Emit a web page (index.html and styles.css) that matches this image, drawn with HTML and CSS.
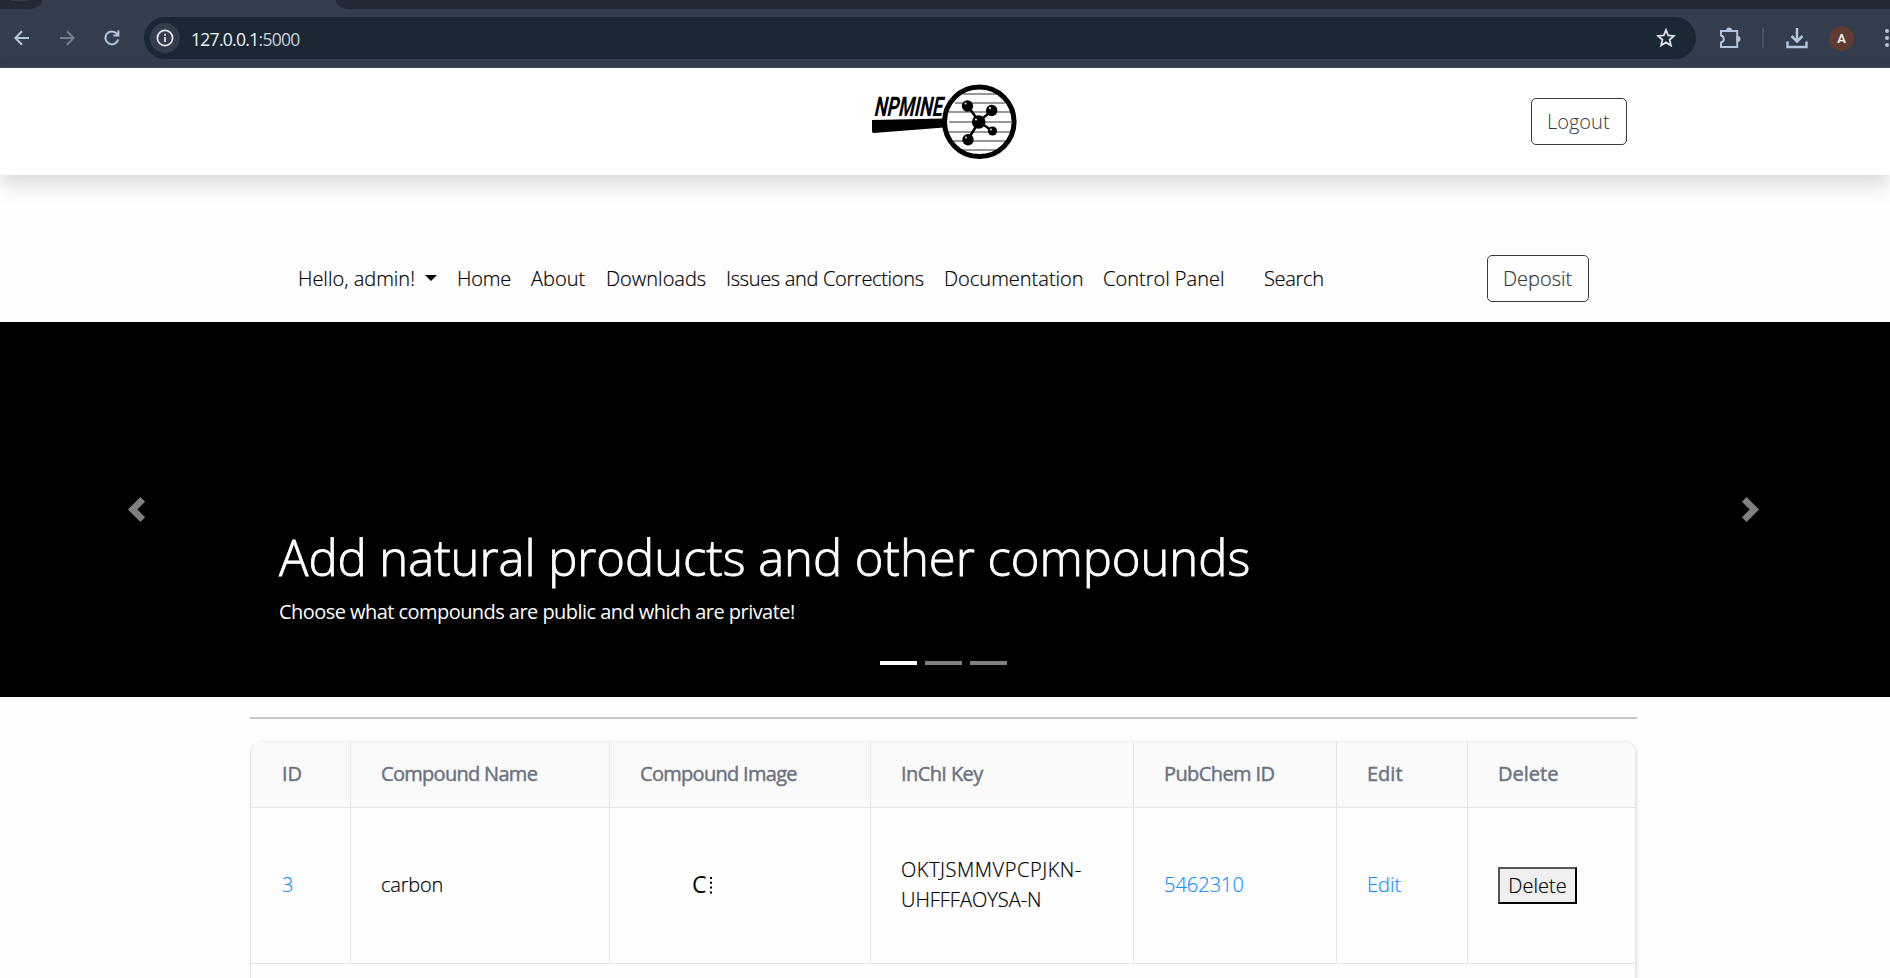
FILE: index.html
```html
<!DOCTYPE html>
<html lang="en">
<head>
<meta charset="utf-8">
<title>NPMine</title>
<link rel="stylesheet" href="styles.css">
</head>
<body>
<div class="browser">
  <div class="tabs"><span class="tab-left"><i></i></span><span class="tab-right"></span></div>
  <div class="toolbar">
    <svg class="ico back" width="16" height="16" viewBox="0 0 16 16"><path d="M15 8H2M8 1.2L1.4 8L8 14.8"/></svg>
    <svg class="ico forward" width="16" height="16" viewBox="0 0 16 16"><path d="M1 8h13M8 1.2L14.6 8L8 14.8"/></svg>
    <svg class="ico reload" width="16" height="16" viewBox="0 0 16 16"><path d="M14.2 9.5A6.5 6.5 0 1 1 12.8 3.6L14.3 5.2M14.4 .5V5.4H9.4"/></svg>
    <div class="omnibox">
      <span class="info"><svg width="18" height="18" viewBox="0 0 18 18"><circle cx="9" cy="9" r="7.6"/><path d="M9 8v5M9 4.8v2"/></svg></span>
      <span class="url"><b>127.0.0.1</b>:5000</span>
      <svg class="star" width="20" height="20" viewBox="0 0 20 20"><path d="M10 2l2.200 5.400 5.800.5-4.400 3.800 1.300 5.700L10 14.400l-4.900 3 1.300-5.700L2 7.900l5.800-.5z"/></svg>
    </div>
    <svg class="ico puzzle" width="22" height="22" viewBox="0 0 22 22"><path d="M2 4h16.200v16H2v-4.500a3.600 3.600 0 0 0 0-7z"/><path d="M8 3.500a2 2 0 0 1 4 0zM18.500 10a2 2 0 0 1 0 4z"/></svg>
    <span class="divider"></span>
    <svg class="ico download" width="22" height="22" viewBox="0 0 22 22"><path d="M11 1v13M5.500 9L11 14.500L16.500 9M1.500 14.500V20h19v-5.500"/></svg>
    <span class="avatar">A</span>
    <svg class="dots" width="6" height="20" viewBox="0 0 6 20"><circle cx="3" cy="3" r="2"/><circle cx="3" cy="10" r="2"/><circle cx="3" cy="17" r="2"/></svg>
  </div>
</div>

<header class="header">
  <svg class="logo" width="148" height="78" viewBox="870 82.500 148 78">
    <path d="M872 119.500L944 118V127L873.500 132.500Q872 132.500 872 130z"/>
    <text transform="translate(873.500 115.800) skewX(-12)" textLength="68" lengthAdjust="spacingAndGlyphs">NPMINE</text>
    <path class="rules" d="M963 93.500h34M955 102.500h50M949 111.500h62M949 121.500h62M949 131.500h62M953 140.500h54M961 149.500h36"/>
    <circle class="ring" cx="979.300" cy="121.300" r="34.800"/>
    <path class="bond" d="M968 106l11 15l13-11M968 139l11-18l14 10"/>
    <circle cx="967.500" cy="105.500" r="5.700"/><circle cx="991.700" cy="110" r="5.700"/><circle cx="978.700" cy="121.500" r="6.800"/><circle cx="968" cy="139.300" r="5.700"/><circle cx="992.500" cy="130.500" r="4.600"/>
    <g class="shine"><circle cx="965.500" cy="103" r="1.100"/><circle cx="990" cy="107.700" r="1.100"/><circle cx="976" cy="119" r="1.100"/><circle cx="966" cy="137" r="1.100"/><circle cx="991" cy="129" r="1"/></g>
  </svg>
  <a class="btn logout"><span>Logout</span></a>
</header>

<nav class="nav">
  <a class="hello"><span>Hello, admin!</span><i class="caret"></i></a>
  <a class="home">Home</a>
  <a class="about">About</a>
  <a class="downloads">Downloads</a>
  <a class="issues">Issues and Corrections</a>
  <a class="docs">Documentation</a>
  <a class="panel">Control Panel</a>
  <a class="search">Search</a>
  <a class="btn deposit"><span>Deposit</span></a>
</nav>

<section class="carousel">
  <svg class="arrow" width="25" height="25" viewBox="0 0 8 8"><path d="M5.250 0l-4 4 4 4 1.500-1.500-2.500-2.500 2.500-2.500z"/></svg>
  <div class="slide">
    <h1>Add natural products and other compounds</h1>
    <p>Choose what compounds are public and which are private!</p>
    <div class="indicators"><i class="active"></i><i></i><i></i></div>
  </div>
  <svg class="arrow" width="25" height="25" viewBox="0 0 8 8"><path d="M2.750 0l-1.500 1.500 2.500 2.500-2.500 2.500 1.500 1.500 4-4z"/></svg>
</section>

<main class="content">
  <hr>
  <div class="table">
    <div class="row head">
      <div><span>ID</span></div><div><span class="tight">Compound Name</span></div><div><span class="tight">Compound Image</span></div><div><span class="snug">InChI Key</span></div><div><span class="snug">PubChem ID</span></div><div><span>Edit</span></div><div><span>Delete</span></div>
    </div>
    <div class="row data">
      <div><a>3</a></div>
      <div><span class="name">carbon</span></div>
      <div class="picture"><svg width="24" height="40" viewBox="0 0 24 40"><text x="0" y="27.500">C</text><path d="M19 12v17"/></svg></div>
      <div class="key"><span class="wide">OKTJSMMVPCPJKN-</span><br><span>UHFFFAOYSA-N</span></div>
      <div><a>5462310</a></div>
      <div><a>Edit</a></div>
      <div><button type="button"><span>Delete</span></button></div>
    </div>
    <div class="row next"></div>
  </div>
</main>
</body>
</html>
```
FILE: styles.css
```css
* { box-sizing: border-box; }
html, body { height: 100%; }
body {
  margin: 0;
  overflow: hidden;
  background: #fefefe;
  color: #000;
  font: 300 20px/30px "Open Sans", sans-serif;
}
a, span, p, h1 { white-space: nowrap; }

/* browser bar */
.browser { height: 68px; background: #333d4d; border-bottom: 1px solid #454d59; }
.tabs { height: 9px; display: flex; justify-content: space-between; }
.tab-left { width: 42px; background: #232a36; border-bottom-right-radius: 12px 9px; }
.tab-left i { display: block; width: 17px; height: 1px; margin-left: 11px; background: #343a42; }
.tab-right { width: 1554px; background: #232a36; border-bottom-left-radius: 12px 9px; }
.toolbar { height: 58px; display: flex; align-items: center; padding-left: 14px; overflow: hidden; }
.toolbar > * { flex: none; }
.ico { fill: none; stroke: #b4c6de; stroke-width: 2; }
.forward { stroke: #767d88; margin-left: 29px; }
.reload { margin-left: 29px; }
.omnibox { width: 1552px; height: 42px; margin-left: 24px; border-radius: 21px; background: #1c2736; display: flex; align-items: center; }
.info { width: 30px; height: 30px; margin-left: 6px; border-radius: 50%; background: #333d4d; display: flex; align-items: center; justify-content: center; }
.info svg, .star { fill: none; stroke: #dfe1e5; stroke-width: 1.8; }
.url { margin: 1px 0 0 11px; font-size: 17.500px; font-weight: 400; letter-spacing: -.7px; color: #c9ced6; }
.url b { font-weight: 400; color: #f0f2f5; }
.star { margin: 0 20px 0 auto; }
.puzzle { margin-left: 23px; }
.divider { width: 2px; height: 20px; margin-left: 21px; background: #4b5361; }
.download { margin-left: 22px; stroke-width: 2.500; }
.avatar { width: 25px; height: 25px; margin-left: 21px; border-radius: 50%; background: #5f3b32; color: #fff; font: 500 13px/25px Roboto, sans-serif; text-align: center; }
.dots { margin-left: 30px; fill: #b4c6de; }

/* header */
.header { position: relative; height: 107px; display: flex; align-items: center; padding-left: 870px; background: #fff; box-shadow: 0 10px 20px rgba(0,0,0,.15); }
.logo text { font: 700 27px Roboto, sans-serif; }
.logo .ring { fill: none; stroke: #000; stroke-width: 5; }
.logo .rules { stroke: #333; stroke-width: 1; }
.logo .bond { fill: none; stroke: #000; stroke-width: 2.500; }
.logo .shine { fill: #ddd; }
.btn { height: 47px; border: 1px solid #343a40; border-radius: 5px; color: #343a40; line-height: 45px; padding-left: 15px; }
.logout { width: 96px; margin-left: 513px; }

/* navigation */
.nav { height: 147px; display: flex; align-items: flex-end; padding: 0 0 20px 298px; -webkit-text-stroke: .2px; }
.nav > a { height: 47px; line-height: 47px; flex: none; }
.nav .hello { width: 159px; display: flex; align-items: center; }
.caret { margin: -2px 20px 0 auto; border: 6px solid transparent; border-top-color: #000; border-bottom: 0; }
.home { width: 74px; letter-spacing: -.2px; }
.about { width: 75px; }
.downloads { width: 120px; }
.issues { width: 218px; letter-spacing: -.32px; }
.docs { width: 159px; }
.panel { width: 161px; }
.search { width: 223px; letter-spacing: -.3px; }
.nav .deposit { width: 102px; line-height: 45px; }

/* carousel */
.carousel { height: 375px; background: #000; color: #fff; display: flex; align-items: center; padding-left: 124px; }
.arrow { fill: #808080; flex: none; }
.slide { width: 1589px; height: 375px; padding: 205px 0 0 130px; flex: none; }
.slide h1 { margin: 0; font-size: 49px; font-weight: 300; line-height: 60px; letter-spacing: -.03px; -webkit-text-stroke: .8px; }
.slide p { margin: 10px 0 0; font-weight: 400; letter-spacing: -.55px; }
.indicators { display: flex; gap: 8px; margin: 34px 0 0 601px; }
.indicators i { width: 37px; height: 4px; background: #808080; }
.indicators .active { background: #fff; }

/* table */
.content { width: 1387px; margin-left: 250px; }
hr { height: 2px; margin: 20px 0 22px; border: 0; background: #c6c6c6; }
.table { width: 1386px; border: 1px solid #e4e5e8; border-top-color: #f1f1f2; border-bottom: 0; border-radius: 12px 12px 0 0; box-shadow: 1px 1px 3px rgba(0,0,0,.12); overflow: hidden; }
.row { display: grid; grid-template-columns: 100px 259px 261px 263px 203px 131px 167px; border-bottom: 1px solid #e4e5e8; }
.row > div { display: flex; align-items: center; padding: 0 0 2px 30px; border-right: 1px solid #e4e5e8; }
.row > div:first-child { padding-left: 31px; }
.row > div:last-child { border-right: 0; }
.head { height: 66px; background: #fafafa; color: #6b7280; font-weight: 500; -webkit-text-stroke: .45px; }
.head .tight { letter-spacing: -.7px; }
.head .snug { letter-spacing: -.6px; }
.data { height: 156px; -webkit-text-stroke: .2px; }
.data .name { letter-spacing: -.2px; }
.data .wide { letter-spacing: .55px; }
.next { height: 30px; border: 0; }
.data a { color: #1890ff; }
.row .key { display: block; padding-top: 47px; }
.row .picture { padding-left: 82px; }
.picture text { font: 400 23px "Open Sans", sans-serif; }
.picture path { stroke: #000; stroke-width: 2; stroke-dasharray: 2 2.800; }
.data > div:last-child { padding-bottom: 0; }
button { width: 79px; height: 37px; padding: 0; border: 2px solid; border-color: #555 #000 #000 #555; background: #efefef; font: inherit; line-height: 32px; }
```
